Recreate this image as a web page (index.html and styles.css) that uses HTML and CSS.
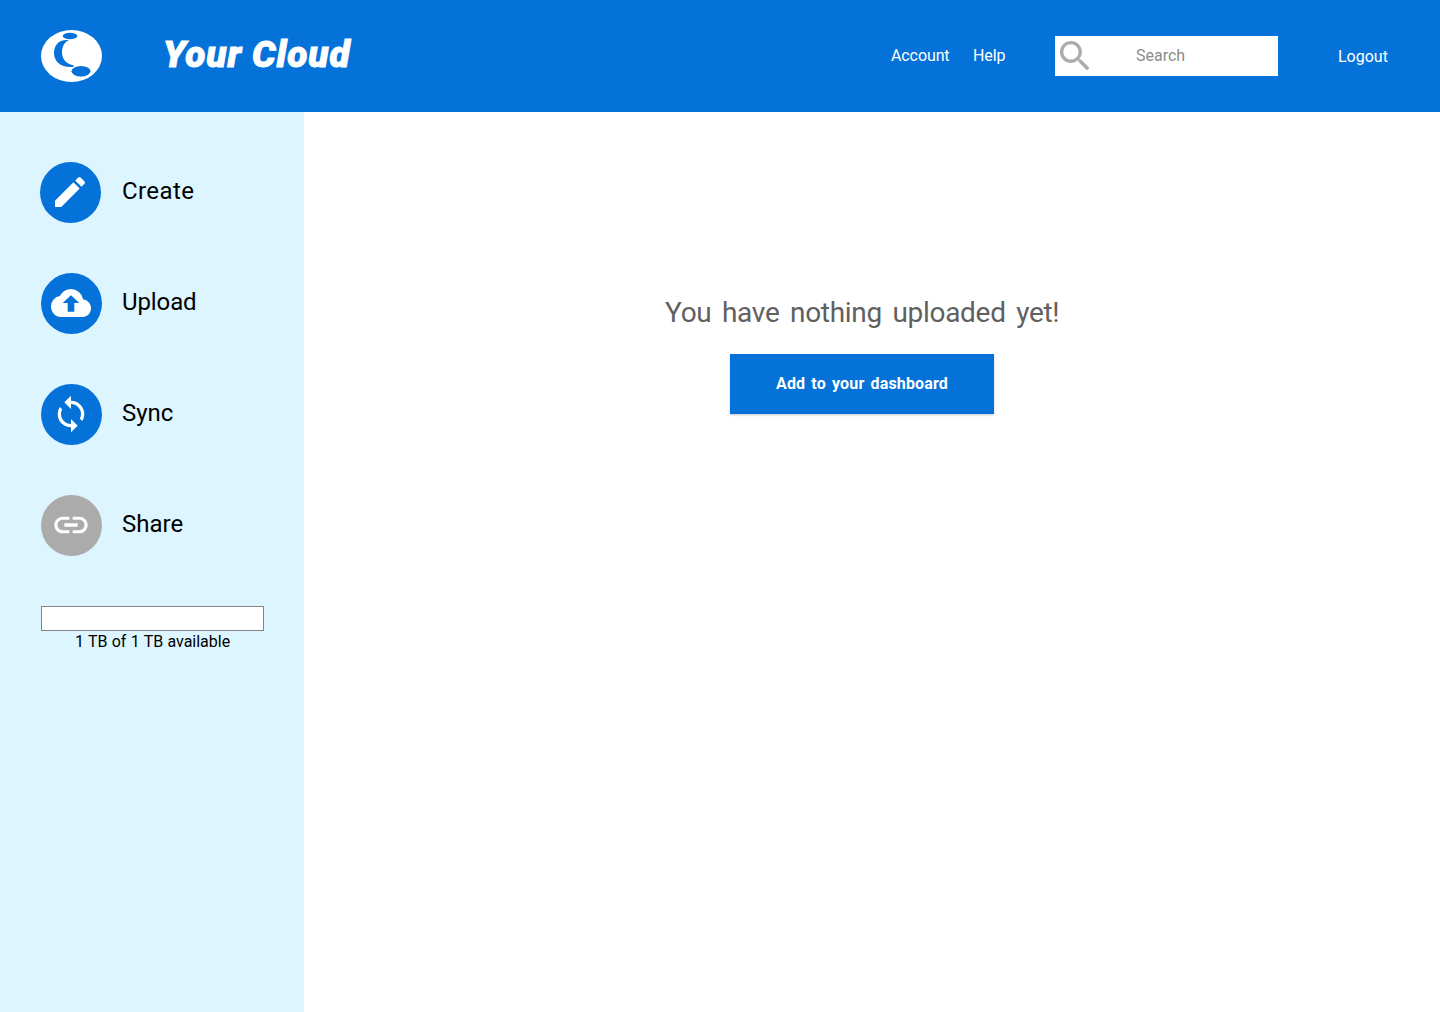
FILE: index.html
```html
<!DOCTYPE html>
<html lang="en">
<head>
<meta charset="utf-8">
<title>Your Cloud</title>
<link rel="stylesheet" href="styles.css">
</head>
<body>
<header class="header">
  <svg class="logo" viewBox="0 0 61 52" aria-hidden="true">
    <ellipse cx="30.5" cy="26" rx="30.5" ry="26" fill="#fff"/>
    <path d="M27 10C17 9.500 13 16 13 23C13 31.500 20 38 32 37L33 35.500C25 34 21 29 21 22.500C21 16 24 11.500 28 10Z"/>
    <ellipse cx="29" cy="6" rx="7.300" ry="3.200"/>
    <ellipse cx="40" cy="41.300" rx="9.500" ry="5.300"/>
  </svg>
  <h1 class="brand">Your Cloud</h1>
  <nav class="nav">
    <a class="account">Account</a>
    <a class="help">Help</a>
  </nav>
  <div class="search">
    <svg class="search-icon" viewBox="3 3 17.490 17.490" aria-hidden="true"><path d="M15.500 14h-.79l-.28-.27A6.471 6.471 0 0 0 16 9.500 6.500 6.500 0 1 0 9.500 16c1.610 0 3.090-.59 4.230-1.570l.27.28v.79l5 4.990L20.490 19l-4.990-5zm-6 0C7.010 14 5 11.990 5 9.500S7.010 5 9.500 5 14 7.010 14 9.500 11.990 14 9.500 14z"/></svg>
    <span class="search-text">Search</span>
  </div>
  <a class="logout">Logout</a>
</header>
<div class="body">
  <aside class="sidebar">
    <div class="action create">
      <span class="circle"><svg width="40" height="40" viewBox="0 0 24 24"><path d="M3 17.250V21h3.750L17.810 9.940l-3.750-3.750L3 17.250zM20.710 7.040a.996.996 0 0 0 0-1.410l-2.340-2.340a.996.996 0 0 0-1.410 0l-1.830 1.830 3.750 3.750 1.830-1.830z"/></svg></span>
      <span class="label">Create</span>
    </div>
    <div class="action upload">
      <span class="circle"><svg width="40" height="42" viewBox="0 0 24 24" preserveAspectRatio="none"><path d="M19.350 10.040A7.490 7.490 0 0 0 12 4C9.110 4 6.600 5.640 5.350 8.040A5.994 5.994 0 0 0 0 14c0 3.310 2.690 6 6 6h13c2.760 0 5-2.240 5-5 0-2.640-2.050-4.780-4.650-4.960zM14 12v5h-4v-5H7l5-4.500 5 4.500h-3z"/></svg></span>
      <span class="label">Upload</span>
    </div>
    <div class="action sync">
      <span class="circle"><svg width="40" height="40" viewBox="0 0 24 24"><path d="M12 4V1L8 5l4 4V6c3.310 0 6 2.690 6 6 0 1.010-.25 1.970-.7 2.800l1.460 1.460A7.930 7.930 0 0 0 20 12c0-4.420-3.580-8-8-8zm0 14c-3.310 0-6-2.690-6-6 0-1.010.25-1.970.7-2.800L5.240 7.740A7.930 7.930 0 0 0 4 12c0 4.420 3.580 8 8 8v3l4-4-4-4v3z"/></svg></span>
      <span class="label">Sync</span>
    </div>
    <div class="action share">
      <span class="circle disabled"><svg width="40" height="40" viewBox="0 0 24 24"><path d="M3.900 12c0-1.710 1.390-3.100 3.100-3.100h4V7H7c-2.760 0-5 2.240-5 5s2.240 5 5 5h4v-1.900H7c-1.710 0-3.100-1.390-3.100-3.100zM8 13h8v-2H8v2zm9-6h-4v1.900h4c1.710 0 3.100 1.390 3.100 3.100s-1.390 3.100-3.100 3.100h-4V17h4c2.760 0 5-2.240 5-5s-2.240-5-5-5z"/></svg></span>
      <span class="label">Share</span>
    </div>
    <div class="meter"></div>
    <p class="storage">1 TB of 1 TB available</p>
  </aside>
  <main class="main">
    <p class="empty">You have nothing uploaded yet!</p>
    <button class="add">Add to your dashboard</button>
  </main>
</div>
</body>
</html>
```
FILE: styles.css
```css
* { box-sizing: border-box; }
body {
  margin: 0;
  background: #fff;
  color: #000;
  font-family: Roboto, "Noto Sans", sans-serif;
  white-space: nowrap;
}
h1, p { margin: 0; font-weight: 400; }
svg { display: block; flex: none; }
.header {
  display: flex;
  align-items: center;
  height: 112px;
  padding-left: 41px;
  background: #0472d9;
  color: #fff;
  font-size: 16px;
  line-height: 24px;
}
.logo { width: 61px; height: 52px; fill: #0472d9; }
.brand {
  width: 190px;
  margin-left: 61px;
  padding-bottom: 3px;
  font: italic 900 37px/44px Roboto, sans-serif;
  letter-spacing: .9px;
  -webkit-text-stroke: .9px #fff;
}
.nav { display: flex; width: 164px; margin-left: 538px; letter-spacing: -.1px; }
.account { width: 82px; }
.search {
  display: flex;
  align-items: center;
  width: 223px;
  height: 40px;
  background: #fff;
}
.search-icon { width: 29.500px; height: 29.500px; margin: 0 0 1px 5px; fill: #ababab; }
.search-text { margin-left: 46.500px; color: #8c8c8c; }
.logout { margin-left: 60px; padding-top: 2px; }
.body { display: flex; height: 900px; }
.sidebar { width: 304px; padding: 50px 40px 0 41px; background: #ddf5ff; }
.action { display: flex; align-items: center; height: 61px; margin-bottom: 50px; }
.create { margin-left: -1px; }
.create .label { margin-left: 21px; letter-spacing: .4px; }
.upload .label { letter-spacing: -.1px; }
.circle {
  display: flex;
  align-items: center;
  justify-content: center;
  width: 61px;
  height: 61px;
  padding: 0 1px 1px 0;
  border-radius: 50%;
  background: #0472d9;
  fill: #fff;
}
.disabled { background: #ababab; }
.label { margin-left: 20px; padding-bottom: 3px; font-size: 24px; line-height: 32px; }
.meter { height: 25px; border: 1px solid #858585; background: #fff; }
.storage { padding-left: 34px; font-size: 16px; line-height: 22px; word-spacing: .3px; }
.main { display: flex; flex-direction: column; padding: 181px 0 0 361px; }
.empty {
  height: 61px;
  color: #606060;
  font-size: 28px;
  line-height: 40px;
  letter-spacing: -.3px;
  word-spacing: 3.900px;
}
.add {
  width: 264px;
  height: 60px;
  margin-left: 65px;
  padding: 0;
  border: 0;
  background: #0472d9;
  box-shadow: 0 1px 2px rgba(0, 0, 0, .22);
  color: #fff;
  font: 700 16px/24px Roboto, sans-serif;
  letter-spacing: .15px;
  word-spacing: 2px;
}
```
